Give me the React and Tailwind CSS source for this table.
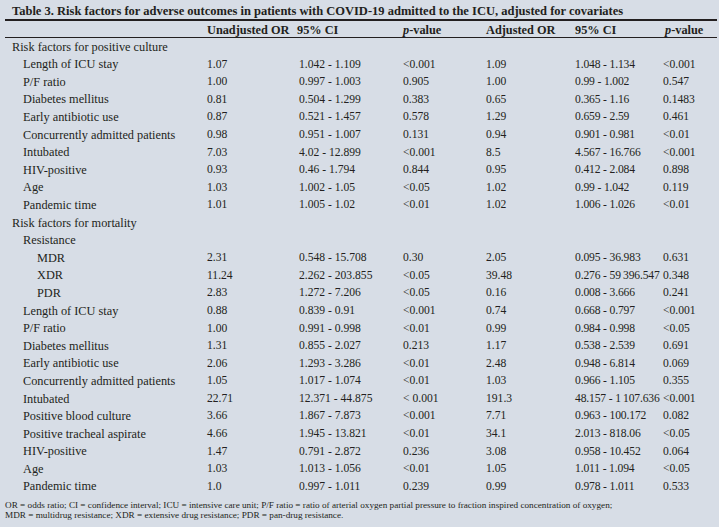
import React from "react";

const rows = [
  { l: "Risk factors for positive culture", lvl: 0 },
  { l: "Length of ICU stay", lvl: 1, v: ["1.07", "1.042 - 1.109", "<0.001", "1.09", "1.048 - 1.134", "<0.001"] },
  { l: "P/F ratio", lvl: 1, v: ["1.00", "0.997 - 1.003", "0.905", "1.00", "0.99 - 1.002", "0.547"] },
  { l: "Diabetes mellitus", lvl: 1, v: ["0.81", "0.504 - 1.299", "0.383", "0.65", "0.365 - 1.16", "0.1483"] },
  { l: "Early antibiotic use", lvl: 1, v: ["0.87", "0.521 - 1.457", "0.578", "1.29", "0.659 - 2.59", "0.461"] },
  { l: "Concurrently admitted patients", lvl: 1, v: ["0.98", "0.951 - 1.007", "0.131", "0.94", "0.901 - 0.981", "<0.01"] },
  { l: "Intubated", lvl: 1, v: ["7.03", "4.02 - 12.899", "<0.001", "8.5", "4.567 - 16.766", "<0.001"] },
  { l: "HIV-positive", lvl: 1, v: ["0.93", "0.46 - 1.794", "0.844", "0.95", "0.412 - 2.084", "0.898"] },
  { l: "Age", lvl: 1, v: ["1.03", "1.002 - 1.05", "<0.05", "1.02", "0.99 - 1.042", "0.119"] },
  { l: "Pandemic time", lvl: 1, v: ["1.01", "1.005 - 1.02", "<0.01", "1.02", "1.006 - 1.026", "<0.01"] },
  { l: "Risk factors for mortality", lvl: 0 },
  { l: "Resistance", lvl: 1 },
  { l: "MDR", lvl: 2, v: ["2.31", "0.548 - 15.708", "0.30", "2.05", "0.095 - 36.983", "0.631"] },
  { l: "XDR", lvl: 2, v: ["11.24", "2.262 - 203.855", "<0.05", "39.48", "0.276 - 59\u2009396.547", "0.348"] },
  { l: "PDR", lvl: 2, v: ["2.83", "1.272 - 7.206", "<0.05", "0.16", "0.008 - 3.666", "0.241"] },
  { l: "Length of ICU stay", lvl: 1, v: ["0.88", "0.839 - 0.91", "<0.001", "0.74", "0.668 - 0.797", "<0.001"] },
  { l: "P/F ratio", lvl: 1, v: ["1.00", "0.991 - 0.998", "<0.01", "0.99", "0.984 - 0.998", "<0.05"] },
  { l: "Diabetes mellitus", lvl: 1, v: ["1.31", "0.855 - 2.027", "0.213", "1.17", "0.538 - 2.539", "0.691"] },
  { l: "Early antibiotic use", lvl: 1, v: ["2.06", "1.293 - 3.286", "<0.01", "2.48", "0.948 - 6.814", "0.069"] },
  { l: "Concurrently admitted patients", lvl: 1, v: ["1.05", "1.017 - 1.074", "<0.01", "1.03", "0.966 - 1.105", "0.355"] },
  { l: "Intubated", lvl: 1, v: ["22.71", "12.371 - 44.875", "< 0.001", "191.3", "48.157 - 1\u2009107.636", "<0.001"] },
  { l: "Positive blood culture", lvl: 1, v: ["3.66", "1.867 - 7.873", "<0.001", "7.71", "0.963 - 100.172", "0.082"] },
  { l: "Positive tracheal aspirate", lvl: 1, v: ["4.66", "1.945 - 13.821", "<0.01", "34.1", "2.013 - 818.06", "<0.05"] },
  { l: "HIV-positive", lvl: 1, v: ["1.47", "0.791 - 2.872", "0.236", "3.08", "0.958 - 10.452", "0.064"] },
  { l: "Age", lvl: 1, v: ["1.03", "1.013 - 1.056", "<0.01", "1.05", "1.011 - 1.094", "<0.05"] },
  { l: "Pandemic time", lvl: 1, v: ["1.0", "0.997 - 1.011", "0.239", "0.99", "0.978 - 1.011", "0.533"] },
];

const grid = "grid grid-cols-[202px_92px_104px_83px_89px_88px_54px]";
const pad = ["pl-[7px]", "pl-[18px]", "pl-[32px]"];

export default function App() {
  return (
    <div
      className="w-[719px] h-[527px] bg-[#d7dde6] text-[#231f20] overflow-hidden"
      style={{ fontFamily: '"Liberation Serif", "Times New Roman", serif' }}
    >
      <div className="pl-[12px] pt-[3px] h-[19px] text-[12.5px] font-bold leading-[16px] whitespace-nowrap">
        Table 3. Risk factors for adverse outcomes in patients with COVID-19 admitted to the ICU, adjusted for covariates
      </div>
      <div className="ml-[5px] w-[712px] border-t-2 border-[#231f20]">
        <div className={`${grid} h-[17px] items-center text-[12.3px] font-bold border-b border-[#231f20] whitespace-nowrap`}>
          <div></div>
          <div>Unadjusted OR</div>
          <div className="-ml-[2px]">95% CI</div>
          <div><i>p</i>-value</div>
          <div>Adjusted OR</div>
          <div>95% CI</div>
          <div className="pl-[2px]"><i>p</i>-value</div>
        </div>
        {rows.map((r, i) => (
          <div key={i} className={`${grid} h-[17.6px] items-center leading-none whitespace-nowrap`}>
            <div className={`${pad[r.lvl]} text-[12.3px]`}>{r.l}</div>
            {r.v
              ? r.v.map((x, j) => (
                  <div key={j} className={j === 4 ? "text-[11.6px] tracking-[-0.15px]" : "text-[11.6px]"}>
                    {x}
                  </div>
                ))
              : null}
          </div>
        ))}
        <div className="pt-[5px] text-[9.2px] leading-[10px] whitespace-nowrap">
          <div>OR = odds ratio; CI = confidence interval; ICU = intensive care unit; P/F ratio = ratio of arterial oxygen partial pressure to fraction inspired concentration of oxygen;</div>
          <div>MDR = multidrug resistance; XDR = extensive drug resistance; PDR = pan-drug resistance.</div>
        </div>
      </div>
    </div>
  );
}
